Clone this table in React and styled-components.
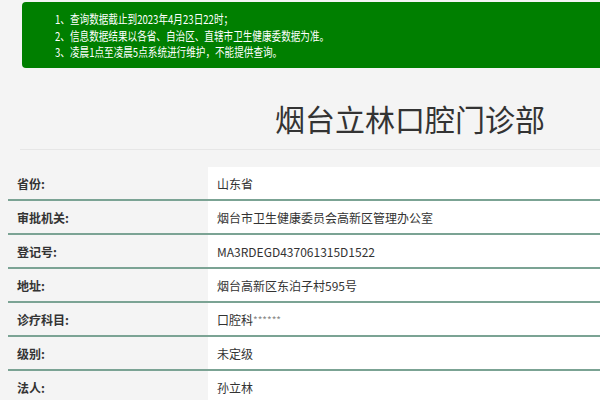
import styled, { createGlobalStyle } from "styled-components";

const GlobalStyle = createGlobalStyle`
  body {
    margin: 0;
    background: #f4f4f4;
    font-family: "Noto Sans CJK SC", "Noto Sans", sans-serif;
    color: #333;
    overflow: hidden;
  }
`;

const Page = styled.main`
  width: 600px;
  overflow: hidden;
`;

const Notice = styled.div`
  margin: 2px -20px 0 22px;
  height: 66px;
  box-sizing: border-box;
  padding: 9px 0 0 33px;
  background: #007f00;
  border-radius: 4px;
  color: #fff;
  font-size: 12px;
  line-height: 16.5px;
`;

const NoticeLine = styled.p`
  margin: 0;
  white-space: nowrap;
  transform: scaleX(0.8);
  transform-origin: left center;
`;

const Title = styled.h1`
  margin: 0 0 0 20px;
  padding: 33px 0 14px 255px;
  font-size: 30px;
  font-weight: 400;
  line-height: 34px;
  color: #333;
  border-bottom: 1px solid #e6e6e6;
`;

const Table = styled.div`
  margin: 17px 0 0 8px;
  display: flex;
  flex-direction: column;
`;

const Row = styled.div`
  display: grid;
  grid-template-columns: 200px 1fr;
  height: 34px;
  box-sizing: border-box;
  border-bottom: 2px solid #7ba394;
`;

const Label = styled.div`
  display: flex;
  align-items: center;
  padding-left: 9px;
  font-size: 12px;
  font-weight: 700;
  color: #333;
`;

const Value = styled.div`
  display: flex;
  align-items: center;
  padding-left: 9px;
  background: #fff;
  font-size: 12px;
  color: #333;
`;

const Stars = styled.span`
  font-size: 10px;
  color: #888;
  align-self: flex-start;
  margin-top: 9px;
`;

const rows = [
  ["省份:", "山东省"],
  ["审批机关:", "烟台市卫生健康委员会高新区管理办公室"],
  ["登记号:", "MA3RDEGD437061315D1522"],
  ["地址:", "烟台高新区东泊子村595号"],
  ["诊疗科目:", "口腔科", "******"],
  ["级别:", "未定级"],
  ["法人:", "孙立林"],
];

const App = () => {
  return (
    <Page>
      <GlobalStyle />
      <Notice>
        <NoticeLine>1、查询数据截止到2023年4月23日22时；</NoticeLine>
        <NoticeLine>2、信息数据结果以各省、自治区、直辖市卫生健康委数据为准。</NoticeLine>
        <NoticeLine>3、凌晨1点至凌晨5点系统进行维护，不能提供查询。</NoticeLine>
      </Notice>
      <Title>烟台立林口腔门诊部</Title>
      <Table>
        {rows.map(([label, value, extra]) => (
          <Row key={label}>
            <Label>{label}</Label>
            <Value>
              {value}
              {extra && <Stars>{extra}</Stars>}
            </Value>
          </Row>
        ))}
      </Table>
    </Page>
  );
};

export default App;
